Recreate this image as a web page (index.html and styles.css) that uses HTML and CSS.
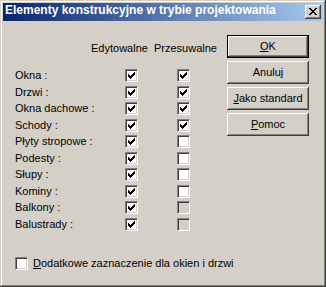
FILE: index.html
```html
<!DOCTYPE html>
<html lang="pl">
<head>
<meta charset="utf-8">
<title>Elementy konstrukcyjne w trybie projektowania</title>
<link rel="stylesheet" href="styles.css">
</head>
<body>
<div class="window">
  <div class="titlebar">
    <span class="title">Elementy konstrukcyjne w trybie projektowania</span>
    <span class="close"><svg width="8" height="7" viewBox="0 0 8 7" shape-rendering="crispEdges"><path fill="#000" d="M0 0h2v1H0zM6 0h2v1H6zM1 1h2v1H1zM5 1h2v1H5zM2 2h4v1H2zM3 3h2v1H3zM2 4h4v1H2zM1 5h2v1H1zM5 5h2v1H5zM0 6h2v1H0zM6 6h2v1H6z"/></svg></span>
  </div>
  <div class="body">
    <div class="top">
      <div class="table">
        <div class="head"><span>Edytowalne</span><span>Przesuwalne</span></div>
        <div class="rows">
          <span class="lbl">Okna :</span>
          <span class="cb"><svg viewBox="0 0 11 11" shape-rendering="crispEdges"><path d="M2 4h1v3H2zM3 5h1v3H3zM4 6h1v3H4zM5 5h1v3H5zM6 4h1v3H6zM7 3h1v3H7zM8 2h1v3H8z"/></svg></span>
          <span class="cb"><svg viewBox="0 0 11 11" shape-rendering="crispEdges"><path d="M2 4h1v3H2zM3 5h1v3H3zM4 6h1v3H4zM5 5h1v3H5zM6 4h1v3H6zM7 3h1v3H7zM8 2h1v3H8z"/></svg></span>

          <span class="lbl">Drzwi :</span>
          <span class="cb"><svg viewBox="0 0 11 11" shape-rendering="crispEdges"><path d="M2 4h1v3H2zM3 5h1v3H3zM4 6h1v3H4zM5 5h1v3H5zM6 4h1v3H6zM7 3h1v3H7zM8 2h1v3H8z"/></svg></span>
          <span class="cb"><svg viewBox="0 0 11 11" shape-rendering="crispEdges"><path d="M2 4h1v3H2zM3 5h1v3H3zM4 6h1v3H4zM5 5h1v3H5zM6 4h1v3H6zM7 3h1v3H7zM8 2h1v3H8z"/></svg></span>

          <span class="lbl">Okna dachowe :</span>
          <span class="cb"><svg viewBox="0 0 11 11" shape-rendering="crispEdges"><path d="M2 4h1v3H2zM3 5h1v3H3zM4 6h1v3H4zM5 5h1v3H5zM6 4h1v3H6zM7 3h1v3H7zM8 2h1v3H8z"/></svg></span>
          <span class="cb"><svg viewBox="0 0 11 11" shape-rendering="crispEdges"><path d="M2 4h1v3H2zM3 5h1v3H3zM4 6h1v3H4zM5 5h1v3H5zM6 4h1v3H6zM7 3h1v3H7zM8 2h1v3H8z"/></svg></span>

          <span class="lbl">Schody :</span>
          <span class="cb"><svg viewBox="0 0 11 11" shape-rendering="crispEdges"><path d="M2 4h1v3H2zM3 5h1v3H3zM4 6h1v3H4zM5 5h1v3H5zM6 4h1v3H6zM7 3h1v3H7zM8 2h1v3H8z"/></svg></span>
          <span class="cb"><svg viewBox="0 0 11 11" shape-rendering="crispEdges"><path d="M2 4h1v3H2zM3 5h1v3H3zM4 6h1v3H4zM5 5h1v3H5zM6 4h1v3H6zM7 3h1v3H7zM8 2h1v3H8z"/></svg></span>

          <span class="lbl">Płyty stropowe :</span>
          <span class="cb"><svg viewBox="0 0 11 11" shape-rendering="crispEdges"><path d="M2 4h1v3H2zM3 5h1v3H3zM4 6h1v3H4zM5 5h1v3H5zM6 4h1v3H6zM7 3h1v3H7zM8 2h1v3H8z"/></svg></span>
          <span class="cb"></span>

          <span class="lbl">Podesty :</span>
          <span class="cb"><svg viewBox="0 0 11 11" shape-rendering="crispEdges"><path d="M2 4h1v3H2zM3 5h1v3H3zM4 6h1v3H4zM5 5h1v3H5zM6 4h1v3H6zM7 3h1v3H7zM8 2h1v3H8z"/></svg></span>
          <span class="cb"></span>

          <span class="lbl">Słupy :</span>
          <span class="cb"><svg viewBox="0 0 11 11" shape-rendering="crispEdges"><path d="M2 4h1v3H2zM3 5h1v3H3zM4 6h1v3H4zM5 5h1v3H5zM6 4h1v3H6zM7 3h1v3H7zM8 2h1v3H8z"/></svg></span>
          <span class="cb"></span>

          <span class="lbl">Kominy :</span>
          <span class="cb"><svg viewBox="0 0 11 11" shape-rendering="crispEdges"><path d="M2 4h1v3H2zM3 5h1v3H3zM4 6h1v3H4zM5 5h1v3H5zM6 4h1v3H6zM7 3h1v3H7zM8 2h1v3H8z"/></svg></span>
          <span class="cb"></span>

          <span class="lbl">Balkony :</span>
          <span class="cb"><svg viewBox="0 0 11 11" shape-rendering="crispEdges"><path d="M2 4h1v3H2zM3 5h1v3H3zM4 6h1v3H4zM5 5h1v3H5zM6 4h1v3H6zM7 3h1v3H7zM8 2h1v3H8z"/></svg></span>
          <span class="cb dis"></span>

          <span class="lbl">Balustrady :</span>
          <span class="cb"><svg viewBox="0 0 11 11" shape-rendering="crispEdges"><path d="M2 4h1v3H2zM3 5h1v3H3zM4 6h1v3H4zM5 5h1v3H5zM6 4h1v3H6zM7 3h1v3H7zM8 2h1v3H8z"/></svg></span>
          <span class="cb dis"></span>
        </div>
      </div>
      <div class="buttons">
        <div class="btn default"><span><u>O</u>K</span></div>
        <div class="btn"><span>Anuluj</span></div>
        <div class="btn"><span><u>J</u>ako standard</span></div>
        <div class="btn"><span><u>P</u>omoc</span></div>
      </div>
    </div>
    <div class="bottom">
      <span class="cb"></span>
      <span class="lbl"><u>D</u>odatkowe zaznaczenie dla okien i drzwi</span>
    </div>
  </div>
</div>
</body>
</html>
```

FILE: styles.css
```css
html, body {
  margin: 0;
  padding: 0;
  background: #d4d0c8;
}

.window {
  width: 326px;
  height: 287px;
  box-sizing: border-box;
  padding: 3px;
  background: #d4d0c8;
  box-shadow: inset -1px -1px #404040, inset 1px 1px #d4d0c8, inset -2px -2px #808080, inset 2px 2px #ffffff;
  display: flex;
  flex-direction: column;
  font-family: "Liberation Sans", Arial, sans-serif;
  font-size: 11px;
  color: #000;
}

.titlebar {
  height: 18px;
  box-sizing: border-box;
  padding: 1px 2px 0 2px;
  display: flex;
  align-items: flex-start;
  background: linear-gradient(to right, #0a246a, #a6caf0);
}

.title {
  flex: 1;
  color: #fff;
  font-weight: bold;
  font-size: 12px;
  line-height: 13px;
  white-space: nowrap;
}

.close {
  width: 16px;
  height: 14px;
  margin-top: 1px;
  box-sizing: border-box;
  background: #d4d0c8;
  box-shadow: inset -1px -1px #404040, inset 1px 1px #ffffff, inset -2px -2px #808080, inset 2px 2px #d4d0c8;
  display: flex;
  padding: 3px 0 0 4px;
}

.close svg {
  display: block;
}

.body {
  flex: 1;
  display: flex;
  flex-direction: column;
  padding: 0 0 14px 12px;
}

.top {
  display: flex;
}

.table {
  width: 180px;
  padding-top: 21px;
}

.head {
  display: grid;
  grid-template-columns: 76px 63px auto;
  line-height: 13px;
  white-space: nowrap;
}

.head span:first-child {
  grid-column: 2;
}

.rows {
  margin-top: 14px;
  display: grid;
  grid-template-columns: 110px 52px 13px;
  grid-auto-rows: 16.5px;
  align-items: start;
}

.lbl {
  line-height: 13px;
  white-space: nowrap;
}

.cb {
  display: block;
  width: 13px;
  height: 13px;
  box-sizing: border-box;
  border: 1px solid;
  border-color: #808080 #ffffff #ffffff #808080;
  box-shadow: inset 1px 1px #404040, inset -1px -1px #d4d0c8;
  background: #fff;
}

.cb.dis {
  background: #d4d0c8;
}

.cb svg {
  display: block;
  width: 11px;
  height: 11px;
  fill: #000;
}

.buttons {
  margin-left: auto;
  margin-right: 14px;
  padding-top: 14px;
  display: flex;
  flex-direction: column;
  gap: 3px;
}

.btn {
  width: 82px;
  height: 23px;
  box-sizing: border-box;
  display: flex;
  align-items: center;
  justify-content: center;
  line-height: 13px;
  background: #d4d0c8;
  box-shadow: inset -1px -1px #404040, inset 1px 1px #ffffff, inset -2px -2px #808080, inset 2px 2px #d4d0c8;
  white-space: nowrap;
}

.btn.default {
  box-shadow: inset 0 0 0 1px #000, inset -2px -2px #404040, inset 2px 2px #ffffff, inset -3px -3px #808080, inset 3px 3px #d4d0c8;
}

.bottom {
  margin-top: auto;
  display: flex;
  align-items: flex-start;
  gap: 5px;
}
```
